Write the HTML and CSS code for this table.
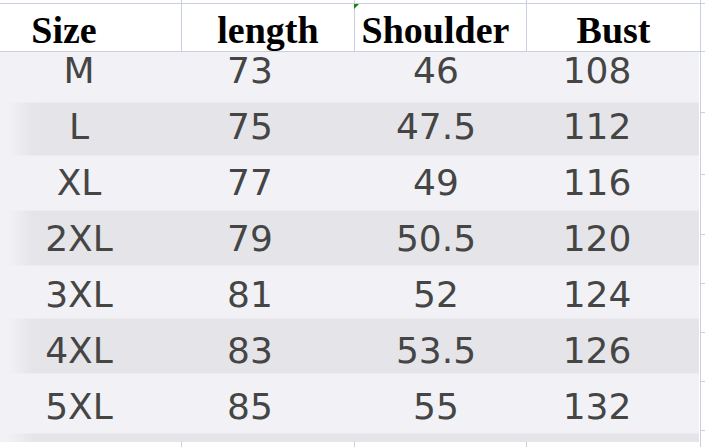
FILE: index.html
```html
<!DOCTYPE html>
<html>
<head>
<meta charset="utf-8">
<link rel="stylesheet" href="styles.css">
</head>
<body>
<div class="sheet">
  <div class="main">
    <div class="cols strip-top">
      <div class="cell line"></div><div class="cell line"></div><div class="cell line"></div><div class="cell"></div>
    </div>
    <div class="cols hdr">
      <div class="cell line h-size">Size</div>
      <div class="cell line">length</div>
      <div class="cell line h-shoulder">Shoulder</div>
      <div class="cell">Bust</div>
    </div>
    <div class="photo">
      <div class="prow"><span>M</span><span>73</span><span>46</span><span>108</span></div>
      <div class="prow"><span>L</span><span>75</span><span>47.5</span><span>112</span></div>
      <div class="prow"><span>XL</span><span>77</span><span>49</span><span>116</span></div>
      <div class="prow"><span>2XL</span><span>79</span><span>50.5</span><span>120</span></div>
      <div class="prow"><span>3XL</span><span>81</span><span>52</span><span>124</span></div>
      <div class="prow"><span>4XL</span><span>83</span><span>53.5</span><span>126</span></div>
      <div class="prow"><span>5XL</span><span>85</span><span>55</span><span>132</span></div>
    </div>
    <div class="cols strip-bottom">
      <div class="cell line"></div><div class="cell line"></div><div class="cell line"></div><div class="cell"></div>
    </div>
  </div>
  <div class="edge">
    <div class="tick t1"></div>
    <div class="tick t2"></div>
    <div class="tick t3"></div>
    <div class="tick t4"></div>
    <div class="tick t5"></div>
    <div class="tick t6"></div>
    <div class="tick t6"></div>
    <div class="tick t6"></div>
    <div class="tick t6"></div>
  </div>
</div>
</body>
</html>
```
FILE: styles.css
```css
* { box-sizing: border-box; }
html, body { margin: 0; padding: 0; background: #ffffff; }
body { width: 705px; height: 447px; overflow: hidden; }

.sheet { display: flex; height: 447px; }

.main { width: 700px; display: flex; flex-direction: column; }

.cols {
  display: grid;
  grid-template-columns: 182px 173px 172px 173px;
}
.line { border-right: 1px solid #c9cee0; }

.strip-top { height: 3px; }
.strip-bottom { flex: 1; }

.hdr {
  border-top: 1px solid #c9cee0;
  border-bottom: 1px solid #c9cee0;
  height: 49px;
}
.hdr .cell {
  position: relative;
  font-family: "Liberation Serif", "Times New Roman", serif;
  font-weight: bold;
  font-size: 38px;
  line-height: 38px;
  padding-top: 7px;
  text-align: center;
  color: #000;
  white-space: nowrap;
}
.hdr .h-size { padding-right: 53px; }
.hdr .h-shoulder { padding-right: 10px; }
.hdr .h-shoulder::before {
  content: "";
  position: absolute;
  left: -1px;
  top: 0;
  width: 0;
  height: 0;
  border-top: 5px solid #0a8a0a;
  border-right: 5px solid transparent;
}

.photo {
  width: 699px;
  height: 390px;
  padding-top: 1px;
  display: grid;
  grid-template-rows: repeat(6, 56px) 53px;
  background:
    linear-gradient(to right, #f2f2f6 0px, #f2f2f6 8px, rgba(242,242,246,0) 34px),
    linear-gradient(to bottom,
      #f2f2f6 0px, #f2f2f6 50px,
      #e5e5e9 51px, #e5e5e9 103px,
      #f2f2f6 104px, #f2f2f6 158px,
      #e5e5e9 159px, #e5e5e9 213px,
      #f2f2f6 214px, #f2f2f6 266px,
      #e5e5e9 267px, #e5e5e9 321px,
      #f2f2f6 322px, #f2f2f6 381px,
      #e5e5e9 382px, #e5e5e9 390px);
}
.prow {
  display: grid;
  grid-template-columns: 158px 184px 188px 134px 1fr;
  align-items: start;
  font-family: "DejaVu Sans", "Noto Sans", sans-serif;
  font-size: 36px;
  line-height: 36px;
  color: #454545;
}
.prow span { text-align: center; white-space: nowrap; }

.edge {
  width: 5px;
  border-left: 1px solid #c9cee0;
  display: flex;
  flex-direction: column;
}
.tick { border-bottom: 1px solid #c9cee0; }
.t1 { height: 4px; }
.t2 { height: 48px; }
.t3 { height: 61px; }
.t4 { height: 62px; }
.t5 { height: 60px; }
.t6 { height: 49px; }
```
